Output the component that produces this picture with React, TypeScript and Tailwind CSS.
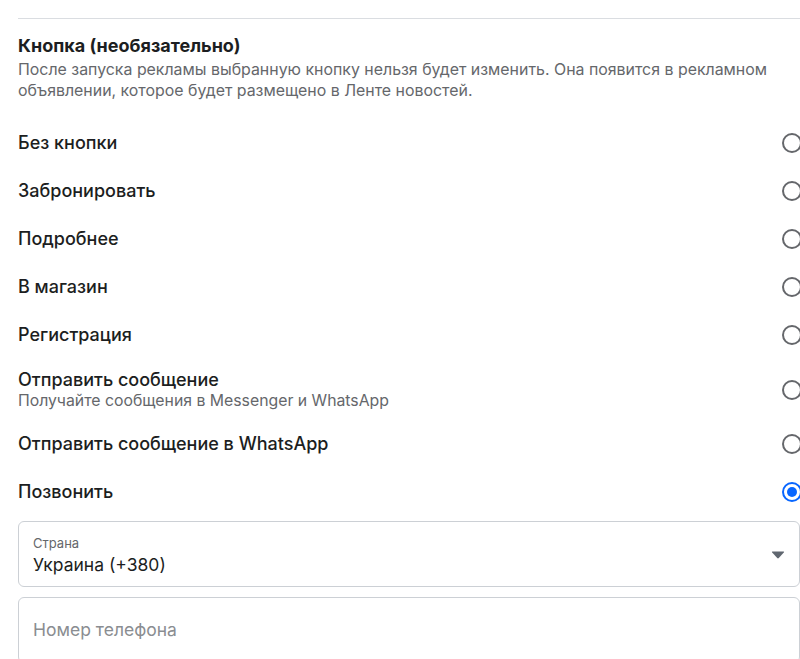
import React from "react";

const options: { title: string; sub?: string; checked?: boolean }[] = [
  { title: "Без кнопки" },
  { title: "Забронировать" },
  { title: "Подробнее" },
  { title: "В магазин" },
  { title: "Регистрация" },
  { title: "Отправить сообщение", sub: "Получайте сообщения в Messenger и WhatsApp" },
  { title: "Отправить сообщение в WhatsApp" },
  { title: "Позвонить", checked: true },
];

function Radio({ checked }: { checked?: boolean }) {
  return checked ? (
    <div className="w-[20px] h-[20px] rounded-full border-2 border-[#0866ff] flex items-center justify-center shrink-0">
      <div className="w-[10px] h-[10px] rounded-full bg-[#0866ff]" />
    </div>
  ) : (
    <div className="w-[20px] h-[20px] rounded-full border-2 border-[#65676b] shrink-0" />
  );
}

export default function App() {
  return (
    <div
      className="w-[800px] h-[659px] overflow-hidden bg-white text-[#1c1e21]"
      style={{ fontFamily: "Inter, 'Noto Sans', 'Liberation Sans', sans-serif" }}
    >
      <div className="ml-[18px] w-[784px]">
        <div className="h-[18px]" />
        <div className="h-px bg-[#dadde1]" />
        <div className="pt-[16px]">
          <div className="text-[18px] leading-[22px] font-bold">Кнопка (необязательно)</div>
          <div className="mt-[2px] text-[15.9px] leading-[21px] text-[#65676b] pr-[10px]">
            После запуска рекламы выбранную кнопку нельзя будет изменить. Она появится в рекламном объявлении, которое будет размещено в Ленте новостей.
          </div>
        </div>
        <div className="mt-[18px] flex flex-col">
          {options.map((o) => (
            <div
              key={o.title}
              className={`flex items-center justify-between ${o.sub ? "h-[61px]" : "h-[48px]"}`}
            >
              <div className="flex flex-col">
                <div className="text-[18px] leading-[22px] font-medium">{o.title}</div>
                {o.sub && (
                  <div className="text-[15.8px] leading-[20px] text-[#65676b]">{o.sub}</div>
                )}
              </div>
              <Radio checked={o.checked} />
            </div>
          ))}
        </div>
        <div className="mt-[5px] mr-[2px] h-[66px] rounded-[6px] border border-[#ccd0d5] flex items-start justify-between pl-[14px] pr-[14px] pt-[14px]">
          <div className="flex flex-col">
            <div className="text-[13px] leading-[15px] text-[#65676b]">Страна</div>
            <div className="mt-[3px] text-[17.5px] leading-[22px]">Украина (+380)</div>
          </div>
          <svg width="14" height="8" viewBox="0 0 14 8" className="mt-[15px]">
            <path d="M1.5 0.5 H12.5 Q13.6 0.5 12.8 1.4 L7.8 7 Q7 7.8 6.2 7 L1.2 1.4 Q0.4 0.5 1.5 0.5 Z" fill="#606770" />
          </svg>
        </div>
        <div className="mt-[10px] mr-[2px] h-[66px] rounded-[6px] border border-[#ccd0d5] flex items-center pl-[14px]">
          <div className="text-[17.5px] leading-[22px] text-[#8a8d91]">Номер телефона</div>
        </div>
      </div>
    </div>
  );
}
